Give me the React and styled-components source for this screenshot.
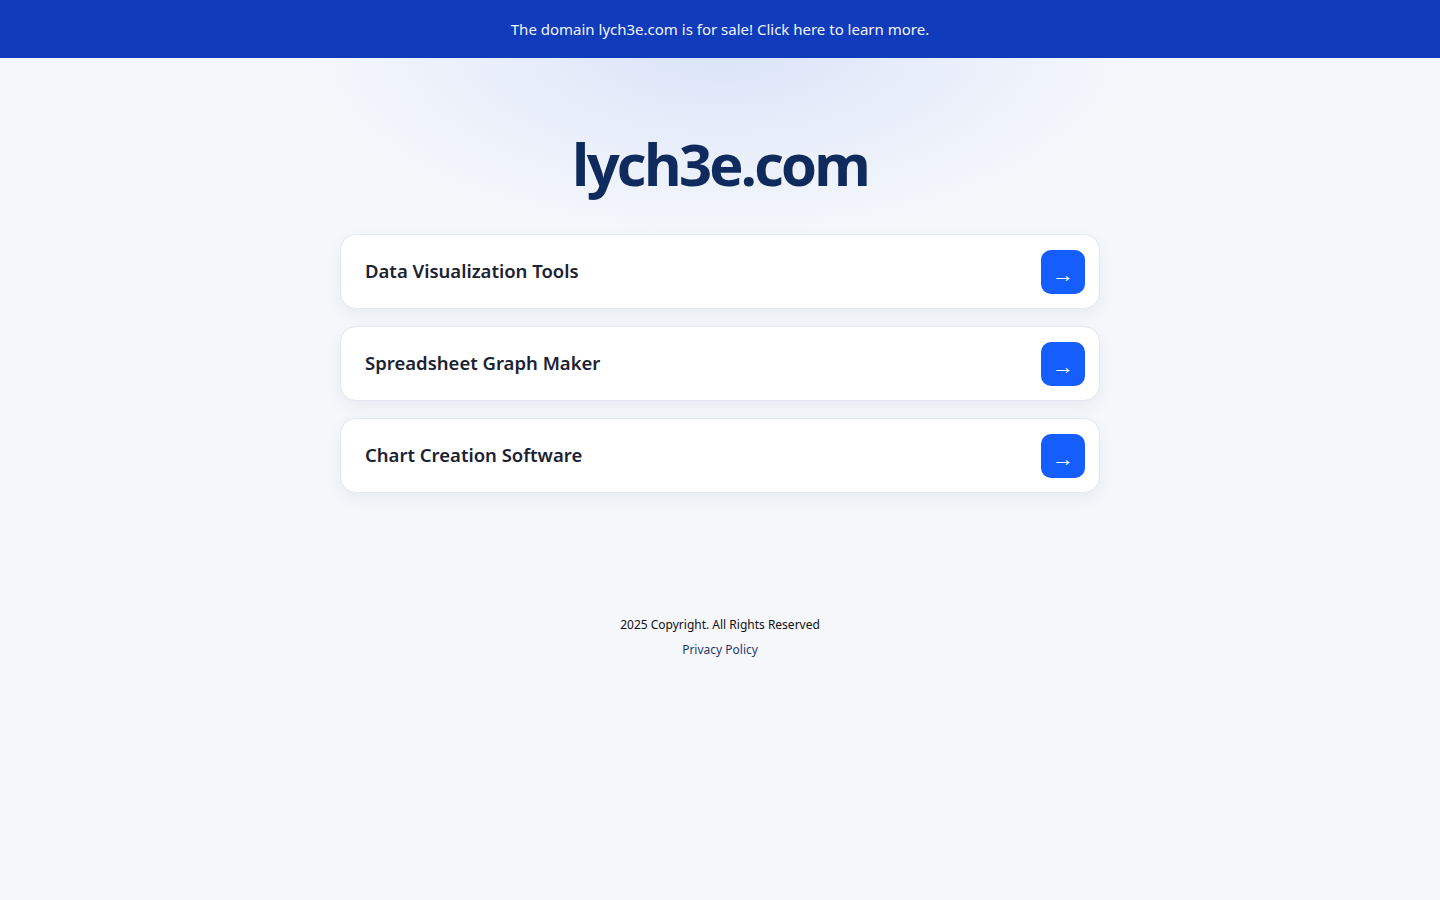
import styled, { createGlobalStyle } from "styled-components";

const GlobalStyle = createGlobalStyle`
  * { box-sizing: border-box; }
  html, body {
    margin: 0;
    padding: 0;
    background: #f5f7fb;
    font-family: "Noto Sans", "Open Sans", sans-serif;
  }
`

const links = [
    'Data Visualization Tools',
    'Spreadsheet Graph Maker',
    'Chart Creation Software',
]

function App() {
    return (
        <>
            <GlobalStyle />
            <Page>
                <Banner href="#">The domain lych3e.com is for sale! Click here to learn more.</Banner>
                <Main>
                    <Title>lych3e.com</Title>
                    <List>
                        {links.map((label) => (
                            <Card key={label} href="#">
                                <CardLabel>{label}</CardLabel>
                                <ArrowButton>→</ArrowButton>
                            </Card>
                        ))}
                    </List>
                </Main>
                <Footer>
                    <Copyright>2025 Copyright. All Rights Reserved</Copyright>
                    <FooterLink href="#">Privacy Policy</FooterLink>
                </Footer>
            </Page>
        </>
    )
}

export default App;

const Page = styled.div`
  min-height: 100vh;
  display: flex;
  flex-direction: column;
  background:
    radial-gradient(ellipse 420px 200px at 50% 40px, rgba(214, 225, 248, 0.9), rgba(245, 247, 251, 0) 100%),
    #f5f7fb;
`

const Banner = styled.a`
  display: flex;
  align-items: center;
  justify-content: center;
  height: 58px;
  background: #103bbb;
  color: #f2f5ff;
  font-size: 15px;
  text-decoration: none;
`

const Main = styled.main`
  display: flex;
  flex-direction: column;
  align-items: center;
  padding-top: 73px;
`

const Title = styled.h1`
  margin: 0 0 37px;
  font-family: "Open Sans", "Noto Sans", sans-serif;
  font-size: 58px;
  font-weight: 700;
  letter-spacing: -2.9px;
  line-height: 66px;
  color: #0f2a5c;
`

const List = styled.div`
  width: 760px;
  display: flex;
  flex-direction: column;
  gap: 17px;
`

const Card = styled.a`
  display: flex;
  align-items: center;
  justify-content: space-between;
  height: 75px;
  padding: 0 14px 0 24px;
  background: #ffffff;
  border: 1px solid #e3e7ef;
  border-radius: 16px;
  box-shadow: 0 6px 16px rgba(30, 50, 100, 0.06);
  text-decoration: none;
`

const CardLabel = styled.span`
  font-size: 18.5px;
  font-weight: 600;
  color: #1a2233;
  margin-top: -2px;
`

const ArrowButton = styled.span`
  width: 44px;
  height: 44px;
  display: flex;
  align-items: center;
  justify-content: center;
  padding-top: 3px;
  border-radius: 10px;
  background: #155efc;
  color: #ffffff;
  font-size: 22px;
  line-height: 1;
`

const Footer = styled.footer`
  display: flex;
  flex-direction: column;
  align-items: center;
  gap: 8px;
  margin-top: 123px;
`

const Copyright = styled.span`
  font-size: 12px;
  color: #111111;
`

const FooterLink = styled.a`
  font-size: 12px;
  color: #1e3a6e;
  text-decoration: none;
`
